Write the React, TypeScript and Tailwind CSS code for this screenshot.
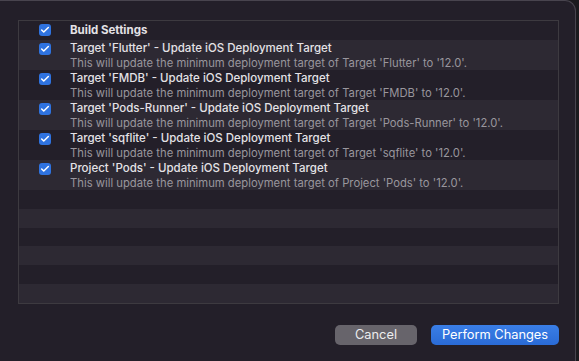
import { Check } from "lucide-react";

const items = [
  { title: "Target 'Flutter' - Update iOS Deployment Target", desc: "This will update the minimum deployment target of Target 'Flutter' to '12.0'." },
  { title: "Target 'FMDB' - Update iOS Deployment Target", desc: "This will update the minimum deployment target of Target 'FMDB' to '12.0'." },
  { title: "Target 'Pods-Runner' - Update iOS Deployment Target", desc: "This will update the minimum deployment target of Target 'Pods-Runner' to '12.0'." },
  { title: "Target 'sqflite' - Update iOS Deployment Target", desc: "This will update the minimum deployment target of Target 'sqflite' to '12.0'." },
  { title: "Project 'Pods' - Update iOS Deployment Target", desc: "This will update the minimum deployment target of Project 'Pods' to '12.0'." },
];

function Checkbox() {
  return (
    <div className="w-[12px] h-[12px] rounded-[3px] bg-[#2f73e0] flex items-center justify-center shrink-0">
      <Check className="w-[10px] h-[10px] text-white" strokeWidth={3.5} />
    </div>
  );
}

export default function App() {
  return (
    <div className="w-[579px] h-[361px] bg-[#1b1a1e] overflow-hidden" style={{ fontFamily: "Inter, 'Noto Sans', sans-serif" }}>
      <div className="w-[576px] h-[361px] bg-[#231f29] border-t border-r border-[#48444e] rounded-tr-[11px] pt-[19px] pl-[18px]">
        {/* table */}
        <div className="w-[541px] h-[284px] border border-[#3d3a40] flex flex-col">
          <div className="h-[19px] flex items-center bg-[#231f29]">
            <div className="ml-[20px]">
              <Checkbox />
            </div>
            <span className="ml-[19px] text-[11.5px] font-bold text-[#e4e2e6]">Build Settings</span>
          </div>
          {items.map((item, i) => (
            <div key={i} className={`h-[30px] flex ${i % 2 === 0 ? "bg-[#2d2933]" : "bg-[#231f29]"}`}>
              <div className="ml-[20px] pt-[3px]">
                <Checkbox />
              </div>
              <div className="ml-[19px] flex flex-col leading-[15px] pt-[1px]">
                <span className="text-[11.5px] font-medium text-[#e4e2e6]">{item.title}</span>
                <span className="text-[11.25px] text-[#99969d]">{item.desc}</span>
              </div>
            </div>
          ))}
          {[0, 1, 2, 3, 4, 5].map((i) => (
            <div key={i} className={`h-[19px] ${i % 2 === 1 ? "bg-[#2d2933]" : "bg-[#231f29]"}`} />
          ))}
        </div>
        <div className="w-[541px] flex justify-end gap-[14px] mt-[21px]">
          <button className="w-[82px] h-[20px] rounded-[5px] bg-[#67646b] text-[#ececee] text-[12.8px] flex items-center justify-center">
            Cancel
          </button>
          <button className="w-[128px] h-[20px] rounded-[5px] bg-gradient-to-b from-[#3a7ee6] to-[#2a6bd6] text-white text-[12.8px] flex items-center justify-center">
            Perform Changes
          </button>
        </div>
      </div>
    </div>
  );
}
